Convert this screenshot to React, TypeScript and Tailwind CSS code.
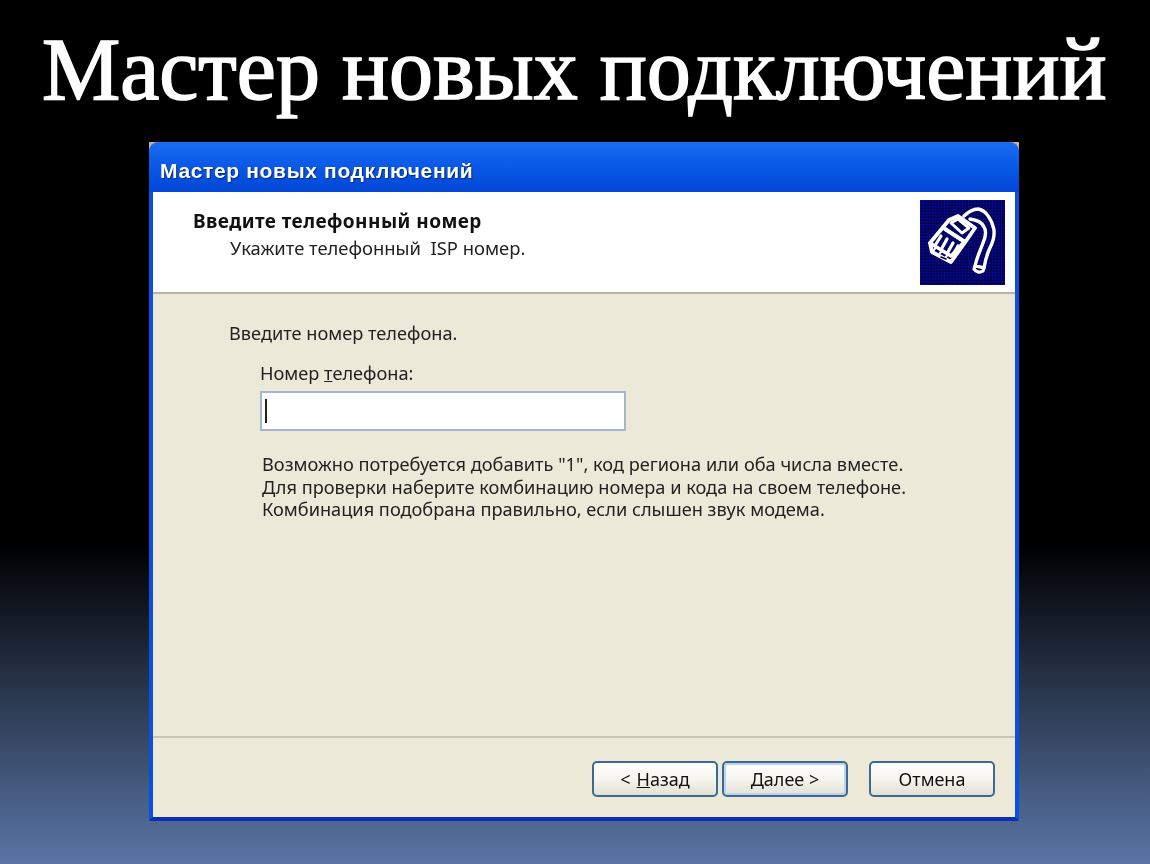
export default function App() {
  const btn = "w-[126px] h-[36px] rounded-[5px] border-2 border-[#3c6a94] bg-gradient-to-b from-white via-[#f6f5ef] to-[#e3e0d2] text-[18px] leading-none text-[#111] flex items-center justify-center";
  return (
    <div className="w-[1150px] h-[864px] overflow-hidden bg-linear-to-b/srgb from-black from-[63%] to-[#5a76a6] flex flex-col" style={{ fontFamily: '"Noto Sans", sans-serif' }}>
      <h1 className="h-[142px] pl-[42px] pt-[20px] text-[88px] leading-[100px] text-white whitespace-nowrap font-normal [-webkit-text-stroke:1.6px_white]" style={{ fontFamily: '"Liberation Serif", serif' }}>Мастер новых подключений</h1>
      <div className="ml-[149px] w-[870px] h-[679px] flex flex-col bg-[#b8b5a5] blur-[0.4px]">
        <div className="h-[50px] shrink-0 rounded-t-[9px] bg-gradient-to-b from-[#1a6cf0] via-[#0a58e6] to-[#0346d6] pl-[11px] pt-[8px] flex items-center">
          <span className="text-[21px] font-bold text-white tracking-[0.65px] [text-shadow:1px_1px_1px_#06287a]" style={{ fontFamily: '"Liberation Sans", sans-serif' }}>Мастер новых подключений</span>
        </div>
        <div className="flex-1 border-x-4 border-x-[#0a50e0] border-b-4 border-b-[#0a2fb0] flex flex-col bg-[#ece9d8]">
          <div className="h-[102px] shrink-0 bg-white flex justify-between pl-[40px] pr-[10px] pt-[17px] border-b-2 border-[#b8b5a6]">
            <div>
              <div className="text-[19px] leading-[24px] font-bold text-[#111] tracking-[0.45px]">Введите телефонный номер</div>
              <div className="pl-[37px] mt-[3px] text-[18.4px] leading-[24px] text-[#222]">Укажите телефонный&nbsp; ISP номер.</div>
            </div>
            <div className="w-[85px] h-[85px] -mt-[9px] shrink-0">
              <svg viewBox="0 0 85 85" className="w-full h-full" fill="none" stroke="#fff" strokeWidth="3" strokeLinejoin="round" strokeLinecap="round">
                <defs>
                  <pattern id="dots" width="3" height="3" patternUnits="userSpaceOnUse">
                    <rect width="3" height="3" fill="#02024a" stroke="none" />
                    <rect width="1.5" height="1.5" fill="#0808c8" stroke="none" />
                  </pattern>
                </defs>
                <rect width="85" height="85" fill="url(#dots)" stroke="none" />
                <path d="M44 16 C49 11 54 9 58 9 C66 10 72 20 74 30 C75 40 71 45 69 50 C66 57 65 62 64 68 L55 66 C57 57 60 51 63 43 C66 36 66 30 64 27 C62 22 58 20 50 19" fill="url(#dots)" strokeWidth="3.4" />
                <path d="M55 66 L64 68 L63 71 C60 73 56 72 54 69 Z" fill="#02024a" strokeWidth="3.2" />
                <path d="M10 43 L29 20 L38 16 L55 28 L46 41 L31 62 L12 52 Z" fill="url(#dots)" strokeWidth="3.8" />
                <path d="M31 23 L38 19 L49 28 L42 33 Z" fill="#02024a" strokeWidth="3" />
                <path d="M25 29 L45 42" strokeWidth="4" />
                <path d="M10 43 L31 56 L45 41" strokeWidth="3.4" />
                <path d="M21 36 L16 44 M27 39 L22 48 M33 43 L28 52 M38 46 L33 55" strokeWidth="3.2" />
                <path d="M14 50 L16 47 M20 53 L22 51 M26 57 L28 54" strokeWidth="2.2" />
                <path d="M21 57 L26 59" stroke="#02024a" strokeWidth="1.6" />
              </svg>
            </div>
          </div>
          <div className="flex-1 pl-[76px] pt-[27px] text-[18.2px] text-[#222]">
            <div className="leading-[24px]">Введите номер телефона.</div>
            <div className="pl-[31px] pt-[16px]">
              <div className="leading-[24px]">Номер <span className="underline">т</span>елефона:</div>
              <div className="mt-[6px] w-[366px] h-[40px] bg-white border-2 border-[#a3b8cf] flex items-center pl-[3px]">
                <div className="w-[2px] h-[24px] bg-[#222]" />
              </div>
              <div className="mt-[22px] leading-[22.5px] whitespace-nowrap pl-[2px]">
                <div>Возможно потребуется добавить "1", код региона или оба числа вместе.</div>
                <div>Для проверки наберите комбинацию номера и кода на своем телефоне.</div>
                <div>Комбинация подобрана правильно, если слышен звук модема.</div>
              </div>
            </div>
          </div>
          <div className="h-[81px] shrink-0 border-t-2 border-[#c8c5b6] flex justify-end items-start pt-[23px] pr-[20px]">
            <div className={btn}>&lt; <span className="underline ml-[6px]">Н</span>азад</div>
            <div className={btn + " ml-[4px] border-[#2f6aa8] shadow-[inset_0_0_0_2px_#bcd4f2]"}><span className="underline">Д</span>алее &gt;</div>
            <div className={btn + " ml-[21px]"}>Отмена</div>
          </div>
        </div>
      </div>
    </div>
  );
}
